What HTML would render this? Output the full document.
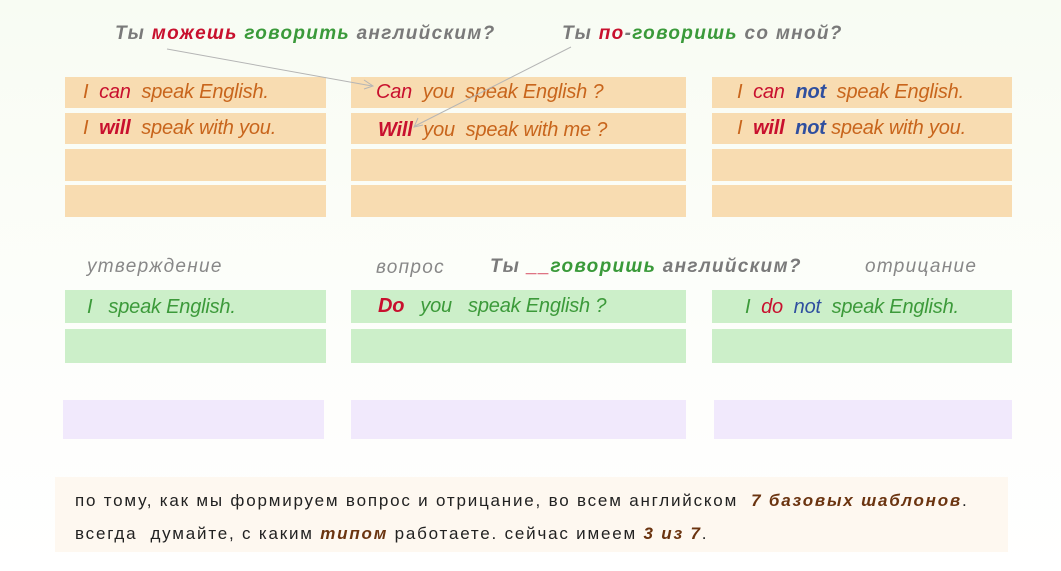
<!DOCTYPE html>
<html><head><meta charset="utf-8"><style>
body{margin:0;width:1061px;height:571px;overflow:hidden;background:linear-gradient(#f8fcf3,#fdfefb 60%,#fff);font-family:"Liberation Sans",sans-serif;position:relative}
.b{position:absolute;box-sizing:border-box;font-style:italic;font-size:20px;line-height:1;padding-top:5px;letter-spacing:-0.2px;white-space:nowrap}
.o{background:#f8dcb1;color:#c8651c}
.g{background:#ccefc9;color:#3c9a3a}
.l{background:#f1e9fc}
.t{position:absolute;font-style:italic;font-weight:bold;font-size:19px;color:#7a7a7a;letter-spacing:1.3px;white-space:nowrap}
.r{color:#c8102e}.gr{color:#3a9a3a}.bl{color:#2f4f9f;font-weight:bold}
.lab{position:absolute;font-style:italic;font-size:19px;color:#888;letter-spacing:1.3px}
</style></head><body>
<div class="t" style="left:115px;top:23px">Ты <span class="r">можешь</span> <span class="gr">говорить</span> английским?</div>
<div class="t" style="left:562px;top:23px">Ты <span class="r">по</span>-<span class="gr">говоришь</span> со мной?</div>
<div class="b o" style="left:65px;top:77px;width:261px;height:31px;padding-left:18px">I&nbsp; <span class="r">can</span>&nbsp; speak English.</div>
<div class="b o" style="left:65px;top:113px;width:261px;height:31px;padding-left:18px">I&nbsp; <b class="r">will</b>&nbsp; speak with you.</div>
<div class="b o" style="left:65px;top:149px;width:261px;height:32px"></div>
<div class="b o" style="left:65px;top:185px;width:261px;height:32px"></div>
<div class="b o" style="left:351px;top:77px;width:335px;height:31px;padding-left:25px"><span class="r">Can</span>&nbsp; you&nbsp; speak English ?</div>
<div class="b o" style="left:351px;top:113px;width:335px;height:31px;padding-left:27px;padding-top:7px"><b class="r">Will</b>&nbsp; you&nbsp; speak with me ?</div>
<div class="b o" style="left:351px;top:149px;width:335px;height:32px"></div>
<div class="b o" style="left:351px;top:185px;width:335px;height:32px"></div>
<div class="b o" style="left:712px;top:77px;width:300px;height:31px;padding-left:25px">I&nbsp; <span class="r">can</span>&nbsp; <span class="bl">not</span>&nbsp; speak English.</div>
<div class="b o" style="left:712px;top:113px;width:300px;height:31px;padding-left:25px">I&nbsp; <b class="r">will</b>&nbsp; <span class="bl">not</span> speak with you.</div>
<div class="b o" style="left:712px;top:149px;width:300px;height:32px"></div>
<div class="b o" style="left:712px;top:185px;width:300px;height:32px"></div>
<svg style="position:absolute;left:0;top:0" width="1061" height="571"><g stroke="#b5b5b5" stroke-width="1" fill="none"><line x1="167" y1="49" x2="372" y2="86"/><polyline points="364,80 373,86 364,89"/><line x1="571" y1="47" x2="415" y2="126"/><polyline points="418,118 414,127 423,125"/></g></svg>
<div class="lab" style="left:87px;top:256px">утверждение</div>
<div class="lab" style="left:376px;top:257px">вопрос</div>
<div class="t" style="left:490px;top:256px">Ты <span class="r">__</span><span class="gr">говоришь</span> английским?</div>
<div class="lab" style="left:865px;top:256px">отрицание</div>
<div class="b g" style="left:65px;top:290px;width:261px;height:33px;padding-left:22px;padding-top:7px">I&nbsp;&nbsp; speak English.</div>
<div class="b g" style="left:65px;top:329px;width:261px;height:34px"></div>
<div class="b g" style="left:351px;top:290px;width:335px;height:33px;padding-left:27px;padding-top:6px"><b class="r">Do</b>&nbsp;&nbsp; you&nbsp;&nbsp; speak English ?</div>
<div class="b g" style="left:351px;top:329px;width:335px;height:34px"></div>
<div class="b g" style="left:712px;top:290px;width:300px;height:33px;padding-left:33px;padding-top:7px">I&nbsp; <span class="r">do</span>&nbsp; <span class="bl" style="font-weight:normal">not</span>&nbsp; speak English.</div>
<div class="b g" style="left:712px;top:329px;width:300px;height:34px"></div>
<div class="b l" style="left:63px;top:400px;width:261px;height:39px"></div>
<div class="b l" style="left:351px;top:400px;width:335px;height:39px"></div>
<div class="b l" style="left:714px;top:400px;width:298px;height:39px"></div>
<div style="position:absolute;left:55px;top:477px;width:953px;height:75px;background:#fef8f0;font-size:17px;color:#222;letter-spacing:1.8px;white-space:nowrap">
<div style="position:absolute;left:20px;top:14px">по тому, как мы формируем вопрос и отрицание, во всем английском&nbsp; <b style="font-style:italic;color:#6b3410">7 базовых шаблонов</b>.</div>
<div style="position:absolute;left:20px;top:47px">всегда&nbsp; думайте, с каким <b style="font-style:italic;color:#6b3410">типом</b> работаете. сейчас имеем <b style="font-style:italic;color:#6b3410">3 из 7</b>.</div>
</div>
</body></html>
